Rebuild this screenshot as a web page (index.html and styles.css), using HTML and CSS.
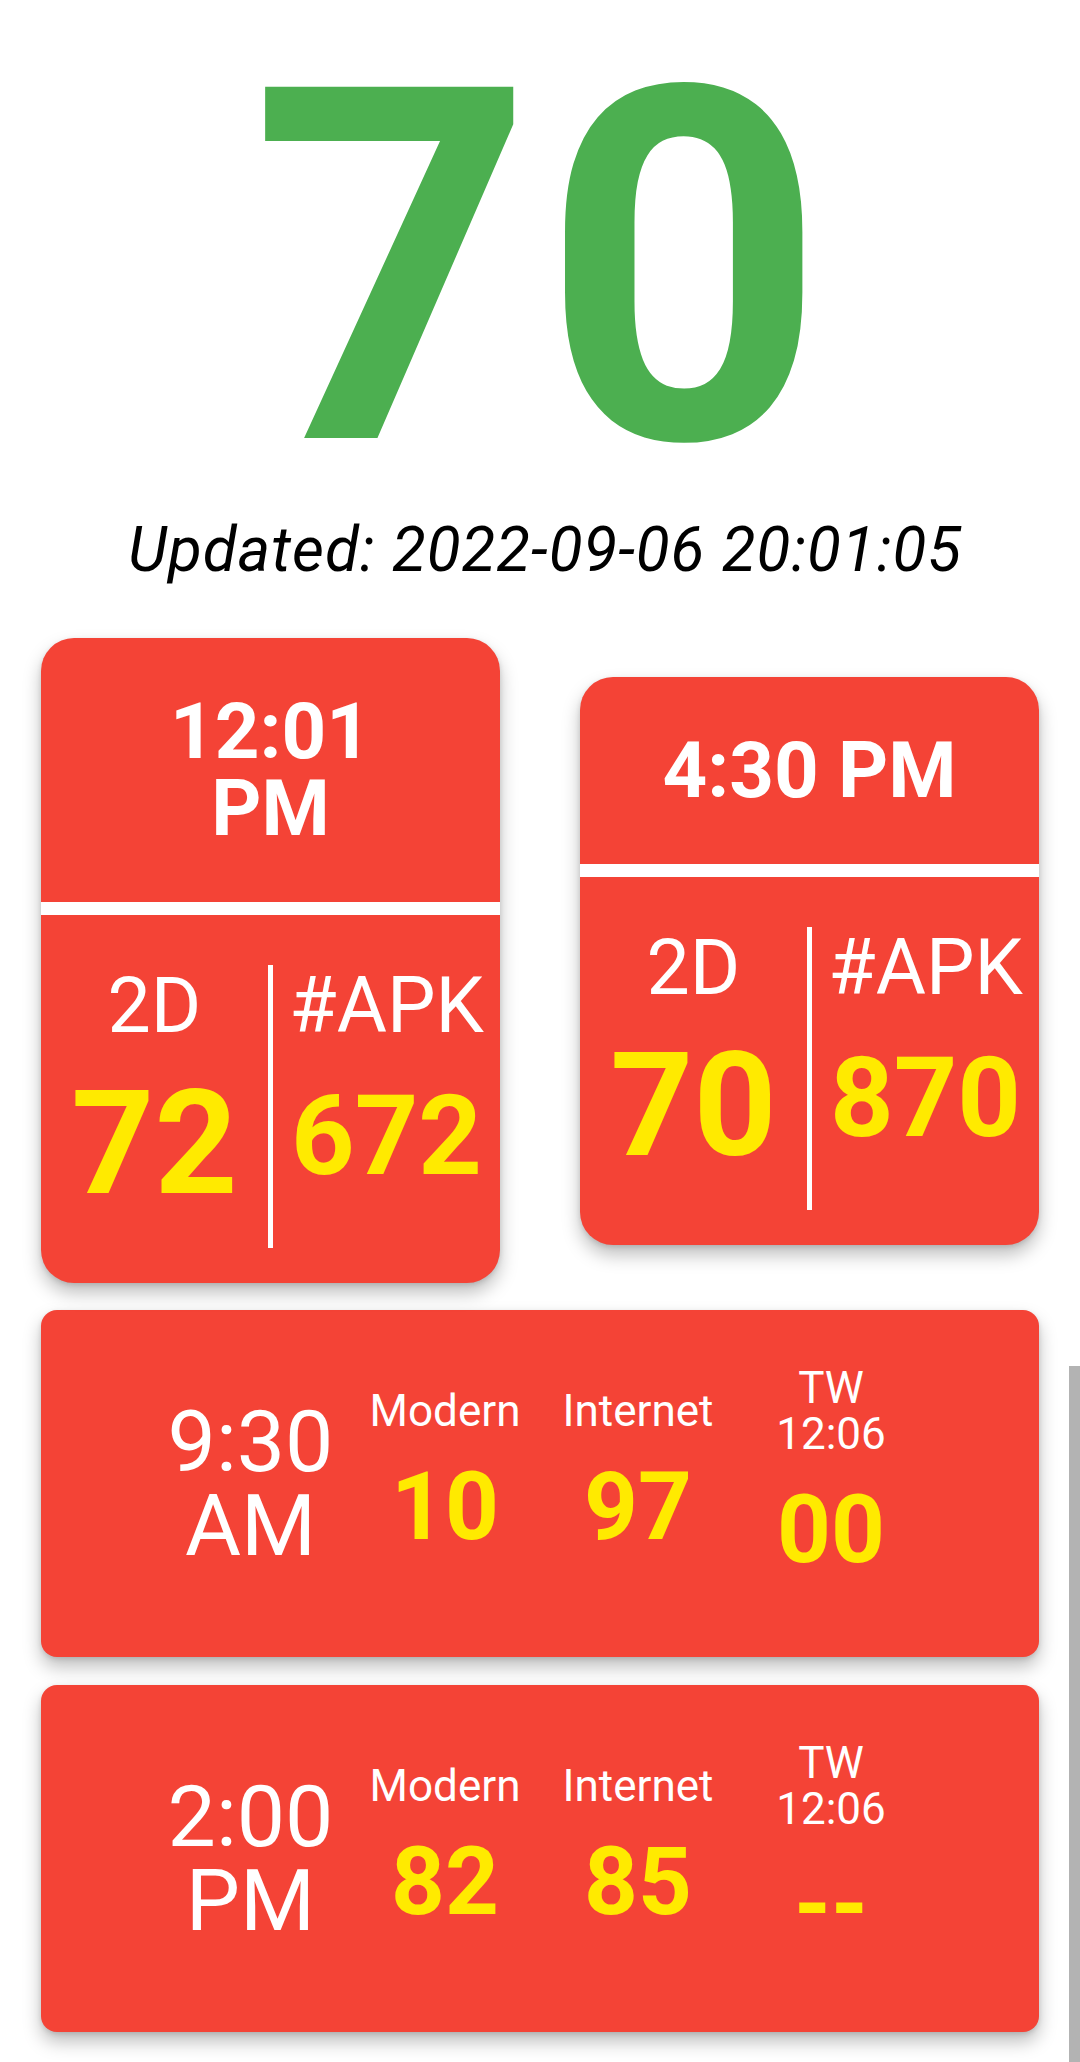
FILE: index.html
```html
<!DOCTYPE html>
<html lang="en">
<head>
  <meta charset="UTF-8" />
  <meta name="viewport" content="width=device-width, initial-scale=1.0" />
  <title>2D Live</title>
  <link rel="stylesheet" href="styles.css">
</head>
<body>
  <div class="hero">70</div>
  <p class="updated">Updated: 2022-09-06 20:01:05</p>

  <div class="top-row">
    <div class="card">
      <div class="card-head">12:01<br>PM</div>
      <div class="card-rule"></div>
      <div class="card-body">
        <div class="col">
          <div class="label">2D</div>
          <div class="num num-lg">72</div>
        </div>
        <div class="divider"></div>
        <div class="col">
          <div class="label">#APK</div>
          <div class="num num-sm">672</div>
        </div>
      </div>
    </div>

    <div class="card">
      <div class="card-head">4:30 PM</div>
      <div class="card-rule"></div>
      <div class="card-body">
        <div class="col">
          <div class="label">2D</div>
          <div class="num num-lg">70</div>
        </div>
        <div class="divider"></div>
        <div class="col">
          <div class="label">#APK</div>
          <div class="num num-sm">870</div>
        </div>
      </div>
    </div>
  </div>

  <div class="wide-card">
    <div class="time">9:30<br>AM</div>
    <div class="result">
      <div class="result-label">Modern</div>
      <div class="result-num">10</div>
    </div>
    <div class="result">
      <div class="result-label">Internet</div>
      <div class="result-num">97</div>
    </div>
    <div class="result">
      <div class="result-label">TW<br>12:06</div>
      <div class="result-num">00</div>
    </div>
  </div>

  <div class="wide-card">
    <div class="time">2:00<br>PM</div>
    <div class="result">
      <div class="result-label">Modern</div>
      <div class="result-num">82</div>
    </div>
    <div class="result">
      <div class="result-label">Internet</div>
      <div class="result-num">85</div>
    </div>
    <div class="result">
      <div class="result-label">TW<br>12:06</div>
      <div class="result-num">--</div>
    </div>
  </div>

  <div class="scrollbar"></div>
</body>
</html>
```

FILE: styles.css
```css
body {
  margin: 0;
  background: #fff;
  font-family: Roboto, "Noto Sans", sans-serif;
  position: relative;
  min-height: 2062px;
  overflow: hidden;
}

.hero {
  padding-top: 23px;
  padding-left: 4px;
  font-size: 494px;
  line-height: 494px;
  font-weight: 700;
  letter-spacing: 8px;
  color: #4caf50;
  text-align: center;
}

.updated {
  margin: -4px 0 0;
  font-size: 62px;
  font-style: italic;
  letter-spacing: 1px;
  color: #000;
  text-align: center;
  padding-left: 10px;
}

.top-row {
  position: relative;
  z-index: 1;
  display: flex;
  align-items: center;
  justify-content: space-between;
  padding: 0 41px;
  margin-top: 52px;
}

.card {
  width: 459px;
  background: #f44336;
  border-radius: 33px;
  overflow: hidden;
  box-shadow: 0 10px 18px rgba(0, 0, 0, 0.25), 0 2px 5px rgba(0, 0, 0, 0.12);
  color: #fff;
}

.card-head {
  padding: 55px 10px;
  font-size: 78px;
  line-height: 77px;
  font-weight: 700;
  text-align: center;
}

.card-rule {
  height: 13px;
  background: #fff;
}

.card-body {
  display: grid;
  grid-template-columns: 1fr 5px 1fr;
  height: 368px;
  box-sizing: border-box;
  padding: 50px 0 35px;
}

.divider {
  background: #fff;
}

.col {
  text-align: center;
  padding-top: 3px;
}

.label {
  font-size: 77px;
  line-height: 77px;
}

.num {
  color: #ffea00;
  font-weight: 700;
}

.num-lg {
  margin-top: 26px;
  font-size: 145px;
  line-height: 145px;
}

.num-sm {
  margin-top: 36px;
  font-size: 111px;
  line-height: 111px;
}

.wide-card {
  display: flex;
  align-items: center;
  justify-content: center;
  height: 347px;
  margin: 27px 41px 0;
  background: #f44336;
  border-radius: 16px;
  box-shadow: 0 10px 18px rgba(0, 0, 0, 0.25), 0 2px 5px rgba(0, 0, 0, 0.12);
  color: #fff;
}

.wide-card + .wide-card {
  margin-top: 28px;
}

.time {
  width: 196px;
  font-size: 86px;
  line-height: 84px;
  text-align: center;
}

.result {
  width: 193px;
  text-align: center;
}

.result-label {
  font-size: 44px;
  line-height: 46px;
}

.result-num {
  font-size: 94px;
  line-height: 146px;
  font-weight: 700;
  color: #ffea00;
}

.scrollbar {
  position: absolute;
  top: 1366px;
  right: 0;
  width: 11px;
  height: 696px;
  background: #b3b3b3;
}
```
